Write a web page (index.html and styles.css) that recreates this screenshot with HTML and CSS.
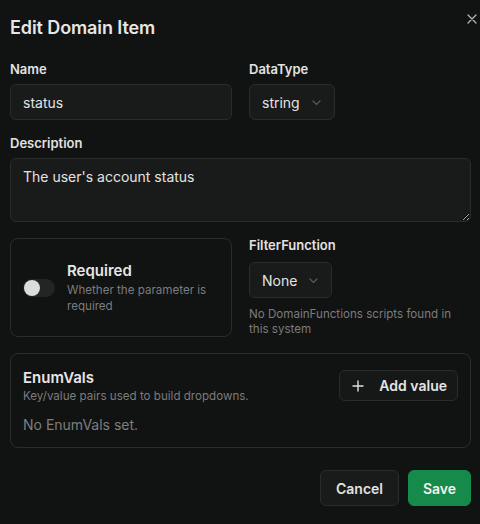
FILE: index.html
```html
<!DOCTYPE html>
<html lang="en">
<head>
<meta charset="utf-8">
<title>Edit Domain Item</title>
<link rel="stylesheet" href="styles.css">
</head>
<body>
<div class="dialog">
  <button class="close" aria-label="Close">
    <svg width="10" height="10" viewBox="0 0 10 10"><path d="M1 1L9 9M9 1L1 9" stroke="#b5b5b5" stroke-width="1.3" stroke-linecap="round"/></svg>
  </button>
  <h1 class="title">Edit Domain Item</h1>

  <div class="grid row1">
    <div class="field">
      <label class="label">Name</label>
      <div class="input">status</div>
    </div>
    <div class="field">
      <label class="label">DataType</label>
      <div class="select select-type">string<svg class="chev" width="9" height="6" viewBox="0 0 9 6"><path d="M1 1L4.5 4.5L8 1" stroke="#5a5b5b" stroke-width="1.2" fill="none" stroke-linecap="round"/></svg></div>
    </div>
  </div>

  <div class="field desc">
    <label class="label">Description</label>
    <textarea class="textarea">The user's account status</textarea>
  </div>

  <div class="grid row2">
    <div class="card required">
      <div class="toggle"><span class="knob"></span></div>
      <div class="req-text">
        <div class="req-title">Required</div>
        <div class="muted">Whether the parameter is required</div>
      </div>
    </div>
    <div class="field filter">
      <label class="label">FilterFunction</label>
      <div class="select select-filter">None<svg class="chev" width="9" height="6" viewBox="0 0 9 6"><path d="M1 1L4.5 4.5L8 1" stroke="#5a5b5b" stroke-width="1.2" fill="none" stroke-linecap="round"/></svg></div>
      <div class="muted help">No DomainFunctions scripts found in this system</div>
    </div>
  </div>

  <div class="card enum">
    <div class="enum-head">
      <div>
        <div class="req-title">EnumVals</div>
        <div class="muted">Key/value pairs used to build dropdowns.</div>
      </div>
      <button class="btn add"><svg width="12" height="12" viewBox="0 0 12 12"><path d="M6 1V11M1 6H11" stroke="#e0e0e0" stroke-width="1.4" stroke-linecap="round"/></svg><span>Add value</span></button>
    </div>
    <div class="empty">No EnumVals set.</div>
  </div>

  <div class="footer">
    <button class="btn cancel">Cancel</button>
    <button class="btn save">Save</button>
  </div>
</div>
</body>
</html>
```

FILE: styles.css
```css
* { box-sizing: border-box; }
html, body {
  margin: 0;
  background: #111212;
  font-family: Inter, "Noto Sans", sans-serif;
  color: #e4e4e4;
}
.dialog {
  position: relative;
  padding: 16px 9px 0 10px;
}
.close {
  position: absolute;
  top: 14px;
  right: 3px;
  width: 10px;
  height: 10px;
  padding: 0;
  border: 0;
  background: none;
  display: flex;
}
.title {
  margin: 0;
  font-size: 18px;
  line-height: 24px;
  font-weight: 600;
  color: #e6e6e6;
  letter-spacing: -0.1px;
}
.grid {
  display: grid;
  grid-template-columns: 1fr 1fr;
  column-gap: 17px;
}
.row1 { margin-top: 20px; }
.field { display: flex; flex-direction: column; align-items: flex-start; }
.label {
  font-size: 13px;
  line-height: 18px;
  font-weight: 600;
  color: #e2e2e2;
  margin-bottom: 6px;
}
.filter .label { margin-top: -2px; margin-bottom: 8px; }
.input, .select, .textarea {
  background: #191a1a;
  border: 1px solid #2a2b2b;
  border-radius: 6px;
  font-size: 14px;
  color: #e4e4e4;
  font-family: inherit;
}
.input {
  width: 100%;
  height: 36px;
  padding: 0 12px;
  display: flex;
  align-items: center;
}
.select {
  height: 36px;
  padding: 0 12px;
  display: flex;
  align-items: center;
  gap: 12px;
}
.select-type { width: 86px; }
.select-filter { width: 83px; }
.chev { margin-top: 1px; }
.desc { margin-top: 14px; }
.textarea {
  width: 100%;
  height: 64px;
  padding: 9px 12px;
  line-height: 18px;
  resize: vertical;
  outline: none;
  display: block;
  color-scheme: dark;
}
.row2 { margin-top: 16px; }
.card {
  border: 1px solid #2b2c2c;
  border-radius: 8px;
}
.required {
  height: 99px;
  display: flex;
  align-items: center;
  padding: 0 12px;
  gap: 12px;
}
.toggle {
  width: 32px;
  height: 18px;
  border-radius: 9px;
  background: #232424;
  display: flex;
  align-items: center;
  padding: 1px;
  flex-shrink: 0;
}
.knob {
  width: 16px;
  height: 16px;
  border-radius: 50%;
  background: #dcdcdc;
}
.req-title {
  font-size: 15px;
  line-height: 20px;
  font-weight: 600;
  color: #e6e6e6;
}
.muted {
  font-size: 11.6px;
  line-height: 16px;
  color: #7c7c7c;
}
.req-text .muted { margin-top: 1px; }
.help { margin-top: 9px; line-height: 15px; }
.enum {
  margin-top: 16px;
  padding: 14px 12px 12px 12px;
}
.enum-head {
  display: flex;
  justify-content: space-between;
  align-items: flex-start;
}
.btn {
  font-family: inherit;
  font-size: 14px;
  font-weight: 600;
  border-radius: 6px;
  cursor: pointer;
}
.add {
  margin-top: 2px;
  height: 31px;
  padding: 0 10px 0 12px;
  background: #161717;
  border: 1px solid #2a2b2b;
  color: #e4e4e4;
  display: flex;
  align-items: center;
  gap: 15px;
}
.empty {
  margin-top: 11px;
  font-size: 14px;
  line-height: 20px;
  color: #7e7e7e;
}
.footer {
  margin-top: 22px;
  display: flex;
  justify-content: flex-end;
  gap: 9px;
}
.cancel {
  width: 79px;
  height: 36px;
  background: #191a1a;
  border: 1px solid #2a2b2b;
  color: #e2e2e2;
}
.save {
  width: 63px;
  height: 36px;
  background: #168a4a;
  border: 1px solid #168a4a;
  color: #f2f2f2;
}
```
